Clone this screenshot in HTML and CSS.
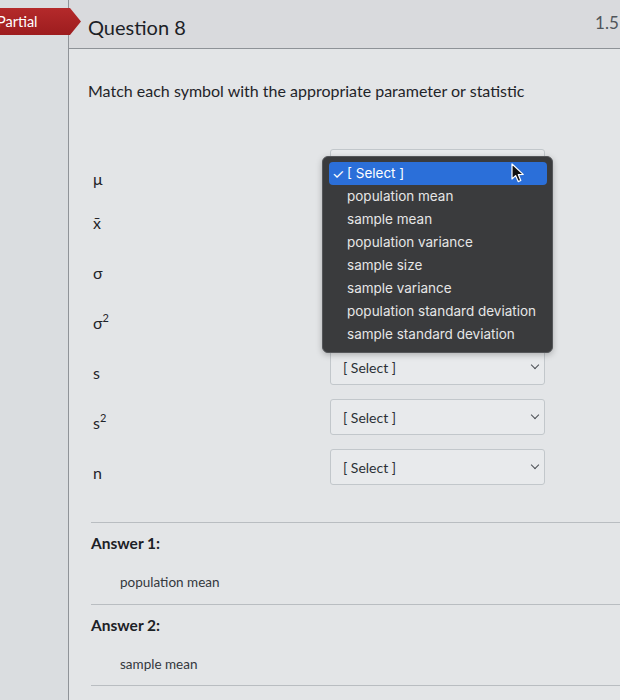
FILE: index.html
```html
<!DOCTYPE html>
<html>
<head>
<meta charset="utf-8">
<link rel="stylesheet" href="styles.css">
</head>
<body>
<div class="page">
  <div class="gutter"></div>
  <div class="main">
    <div class="header">
      <h2 class="qtitle">Question 8</h2>
      <span class="pts">1.5 pts</span>
    </div>
    <div class="content">
      <p class="prompt">Match each symbol with the appropriate parameter or statistic</p>
      <div class="rows">
        <div class="row first">
          <span class="sym">μ</span>
          <div class="select-wrap">
            <div class="select"><span>[ Select ]</span><span class="chev"></span></div>
            <div class="menu">
              <div class="item active"><span class="check">✓</span>[ Select ]</div>
              <div class="item">population mean</div>
              <div class="item">sample mean</div>
              <div class="item">population variance</div>
              <div class="item">sample size</div>
              <div class="item">sample variance</div>
              <div class="item">population standard deviation</div>
              <div class="item">sample standard deviation</div>
              <svg class="cursor" width="14" height="20" viewBox="0 0 14 20"><path d="M1 1 L1 16 L4.6 12.6 L7.2 18.6 L9.8 17.5 L7.3 11.6 L12.2 11.4 Z" fill="#111" stroke="#fff" stroke-width="1.2" stroke-linejoin="round"/></svg>
            </div>
          </div>
        </div>
        <div class="row">
          <span class="sym">x̄</span>
          <div class="select"><span>[ Select ]</span><span class="chev"></span></div>
        </div>
        <div class="row">
          <span class="sym">σ</span>
          <div class="select"><span>[ Select ]</span><span class="chev"></span></div>
        </div>
        <div class="row">
          <span class="sym">σ<sup>2</sup></span>
          <div class="select"><span>[ Select ]</span><span class="chev"></span></div>
        </div>
        <div class="row">
          <span class="sym">s</span>
          <div class="select"><span>[ Select ]</span><span class="chev"></span></div>
        </div>
        <div class="row">
          <span class="sym">s<sup>2</sup></span>
          <div class="select"><span>[ Select ]</span><span class="chev"></span></div>
        </div>
        <div class="row">
          <span class="sym">n</span>
          <div class="select"><span>[ Select ]</span><span class="chev"></span></div>
        </div>
      </div>
      <div class="answers">
        <div class="answer">
          <div class="alabel">Answer 1:</div>
          <div class="aval">population mean</div>
        </div>
        <div class="answer">
          <div class="alabel">Answer 2:</div>
          <div class="aval">sample mean</div>
        </div>
      </div>
    </div>
  </div>
  <div class="badge">Partial</div>
</div>
</body>
</html>
```
FILE: styles.css
```css
html, body {
  margin: 0;
  padding: 0;
  width: 620px;
  height: 700px;
  overflow: hidden;
  background: #e3e5e7;
}
.page {
  position: relative;
  display: flex;
  width: 660px;
  height: 700px;
  font-family: Lato, "Open Sans", sans-serif;
  color: #1f2429;
}
.gutter {
  width: 68px;
  flex-shrink: 0;
  background: #dadde0;
  border-right: 1px solid #8f9398;
}
.main {
  flex: 1;
  display: flex;
  flex-direction: column;
}
.header {
  height: 49px;
  box-sizing: border-box;
  background: #d9dadd;
  border-bottom: 1px solid #8e9297;
  display: flex;
  align-items: center;
  justify-content: space-between;
  padding: 6px 14px 0 19px;
}
.qtitle {
  margin: 0;
  font-size: 20px;
  font-weight: 400;
  color: #1c2126;
}
.pts {
  font-size: 17px;
  color: #50555a;
  white-space: nowrap;
  margin-top: -10px;
}
.badge {
  position: absolute;
  left: 0;
  top: 8px;
  width: 81px;
  height: 27px;
  box-sizing: border-box;
  text-indent: -3px;
  background: linear-gradient(#b42a2b, #9d1c1e);
  clip-path: polygon(0 0, 70px 0, 81px 50%, 70px 100%, 0 100%);
  color: #fff;
  font-size: 14.5px;
  line-height: 27px;
}
.content {
  padding: 0 0 0 19px;
}
.prompt {
  margin: 32px 0 0;
  font-size: 16px;
  line-height: 20px;
  color: #1f2429;
}
.rows {
  margin-top: 48px;
  display: flex;
  flex-direction: column;
}
.row {
  height: 50px;
  display: flex;
  align-items: flex-start;
}
.sym {
  width: 242px;
  flex-shrink: 0;
  padding-left: 5px;
  box-sizing: border-box;
  padding-top: 14px;
  font-size: 16px;
  line-height: 20px;
  color: #1f2429;
}
.row.first .sym {
  padding-top: 20px;
}
.sym sup {
  font-size: 11px;
  vertical-align: 7px;
  line-height: 0;
}
.select-wrap {
  position: relative;
}
.select {
  width: 215px;
  height: 36px;
  box-sizing: border-box;
  border: 1px solid #c2c7cb;
  border-radius: 3px;
  background: #e8eaec;
  display: flex;
  align-items: center;
  justify-content: space-between;
  padding: 0 6px 0 12px;
  font-size: 14px;
  color: #2b3035;
}
.chev {
  width: 5px;
  height: 5px;
  border-right: 1.5px solid #4a4f54;
  border-bottom: 1.5px solid #4a4f54;
  transform: rotate(45deg);
  margin-top: -4px;
}
.menu {
  position: absolute;
  left: -8px;
  top: 7px;
  width: 231px;
  box-sizing: border-box;
  padding: 5px 5px 6px 6px;
  background: #3a3b3d;
  border: 1px solid #55575a;
  border-radius: 6px;
  box-shadow: 0 2px 6px rgba(0,0,0,0.25);
  font-family: Inter, "Liberation Sans", sans-serif;
  font-size: 13.5px;
  color: #e6e6e6;
  z-index: 2;
}
.item {
  height: 23px;
  line-height: 23px;
  padding-left: 18px;
  border-radius: 4px;
  white-space: nowrap;
  position: relative;
}
.item.active {
  background: #2b6fd9;
  color: #fff;
}
.check {
  position: absolute;
  left: 3px;
  font-size: 14px;
}
.cursor {
  position: absolute;
  left: 188px;
  top: 6px;
}
.answers {
  margin-top: 23px;
  padding-left: 3px;
}
.answer {
  border-top: 1px solid #b9bdc1;
  height: 82px;
  box-sizing: border-box;
  padding-top: 10px;
}
.answers .answer:last-child {
  border-bottom: 1px solid #b9bdc1;
}
.alabel {
  font-size: 15.5px;
  font-weight: 700;
  line-height: 20px;
  color: #1c2126;
}
.aval {
  margin-top: 19px;
  padding-left: 29px;
  font-size: 13.5px;
  line-height: 20px;
  color: #33383d;
}
```
